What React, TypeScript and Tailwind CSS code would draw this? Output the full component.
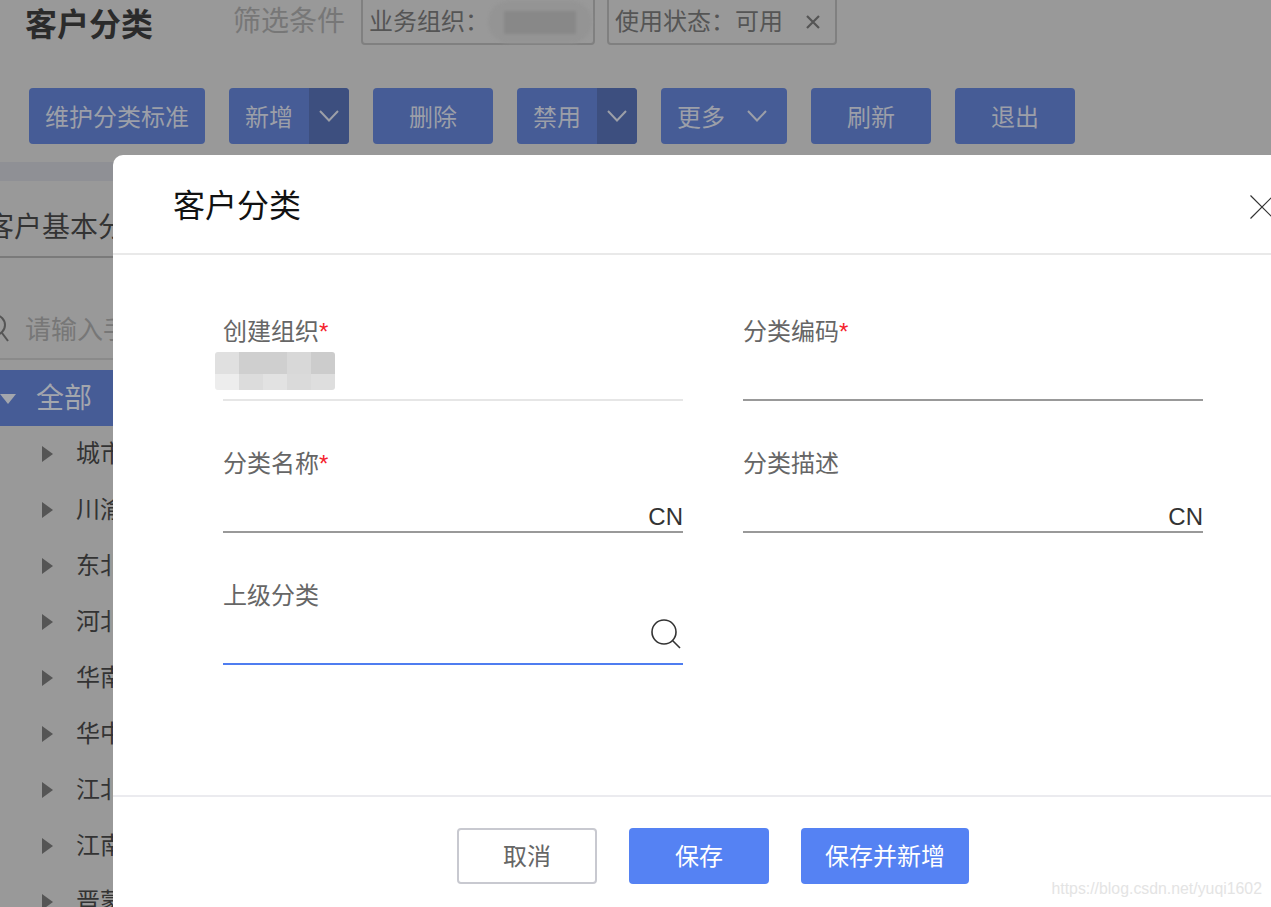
import React from "react";

function Chevron({ className }: { className: string }) {
  return (
    <svg viewBox="0 0 20 12" className={className} fill="none" stroke="currentColor" strokeWidth="2">
      <polyline points="1,1 10,10.5 19,1" />
    </svg>
  );
}

function Btn({ w, label }: { w: string; label: string }) {
  return (
    <div className={`${w} h-14 flex items-center justify-center pt-1 rounded-[4px] bg-[#465c96] text-[24px] text-[#9c9fa8]`}>
      {label}
    </div>
  );
}

function SplitBtn({ label }: { label: string }) {
  return (
    <div className="w-[120px] h-14 flex rounded-[4px] overflow-hidden bg-[#465c96] text-[24px] text-[#9c9fa8]">
      <div className="w-20 flex items-center justify-center pt-1">{label}</div>
      <div className="w-10 flex items-center justify-center bg-[#3d4f7f]">
        <Chevron className="w-5 h-3" />
      </div>
    </div>
  );
}

function TreeRow({ label }: { label: string }) {
  return (
    <div className="h-14 flex items-center pl-[42px] text-[24px] text-[#333] whitespace-nowrap">
      <svg viewBox="0 0 11 16" className="w-[11px] h-4 mr-[23px] shrink-0" fill="#555">
        <polygon points="0,0 11,8 0,16" />
      </svg>
      {label}
    </div>
  );
}

function Field({ label, required, children, line }: { label: string; required?: boolean; children?: React.ReactNode; line: string }) {
  return (
    <div className="h-[88px] flex flex-col">
      <div className="h-9 leading-[37px] text-[24px] text-[#666]">
        {label}
        {required && <span className="text-[#f5222d]">*</span>}
      </div>
      <div className={`h-[52px] flex items-end justify-end border-b-2 ${line}`}>{children}</div>
    </div>
  );
}

function Cn() {
  return <span className="text-[24px] leading-[28px] text-[#333]">CN</span>;
}

export default function App() {
  return (
    <div className="relative w-[1271px] h-[907px] overflow-hidden bg-[#999999] font-['Liberation_Sans','Noto_Sans_CJK_SC',sans-serif]">
      {/* Header */}
      <div className="flex h-[45px] items-end pl-[25px]">
        <div className="self-start w-[208px] h-[44px] leading-[50px] text-[32px] font-bold text-[#2b2b2b] whitespace-nowrap">客户分类</div>
        <div className="self-start w-[128px] h-[44px] leading-[44px] text-[28px] text-[#777] whitespace-nowrap">筛选条件</div>
        <div className="shrink-0 w-[234px] h-[60px] flex items-center pl-[6px] border-2 border-[#808080] rounded-[4px] text-[24px] text-[#555] pt-[14px] whitespace-nowrap">
          业务组织：
          <div className="shrink-0 -ml-px w-[104px] h-[42px] flex items-center justify-center rounded-[21px] bg-[#949494] blur-[1.5px]">
            <div className="w-[72px] h-[23px] bg-[#888888]" />
          </div>
        </div>
        <div className="shrink-0 ml-3 w-[230px] h-[60px] flex items-center pl-[6px] border-2 border-[#808080] rounded-[4px] text-[24px] text-[#555] pt-[14px] whitespace-nowrap">
          使用状态：可用
          <svg viewBox="0 0 14 14" className="w-[14px] h-[14px] ml-[23px]" fill="none" stroke="#555" strokeWidth="2.2">
            <path d="M1 1 13 13M13 1 1 13" />
          </svg>
        </div>
      </div>

      {/* Toolbar */}
      <div className="flex gap-6 mt-[43px] pl-[29px]">
        <Btn w="w-[176px]" label="维护分类标准" />
        <SplitBtn label="新增" />
        <Btn w="w-[120px]" label="删除" />
        <SplitBtn label="禁用" />
        <div className="w-[126px] h-14 flex items-center pl-4 gap-[22px] rounded-[4px] bg-[#465c96] text-[24px] text-[#9c9fa8]">
          <span className="pt-1">更多</span>
          <Chevron className="w-5 h-3" />
        </div>
        <Btn w="w-[120px]" label="刷新" />
        <Btn w="w-[120px]" label="退出" />
      </div>

      {/* Band */}
      <div className="mt-[18px] h-[19px] bg-[#8f9095]" />

      {/* Tab */}
      <div className="h-[77px] flex items-end border-b-2 border-[#7a7a7a]">
        <div className="-ml-[14px] h-[64px] leading-[72px] text-[28px] text-[#333] whitespace-nowrap">客户基本分类</div>
      </div>

      {/* Search */}
      <div className="h-[102px] flex items-center pt-[44px] border-b-2 border-[#8a8a8a]">
        <svg viewBox="0 0 24 32" className="-ml-[15px] w-6 h-8 shrink-0" fill="none" stroke="#555" strokeWidth="2">
          <circle cx="10" cy="11" r="10" />
          <path d="M17 19 23 27" />
        </svg>
        <span className="ml-4 text-[26px] text-[#777] whitespace-nowrap">请输入手机号</span>
      </div>

      {/* Tree */}
      <div className="mt-[10px]">
        <div className="h-14 flex items-center pt-px bg-[#465c96] text-[28px] text-[#a3a6ad] whitespace-nowrap">
          <svg viewBox="0 0 16 10" className="w-4 h-[10px] mr-5 shrink-0" fill="#a3a6ad">
            <polygon points="0,0 16,0 8,10" />
          </svg>
          全部
        </div>
        <TreeRow label="城市" />
        <TreeRow label="川渝" />
        <TreeRow label="东北" />
        <TreeRow label="河北" />
        <TreeRow label="华南" />
        <TreeRow label="华中" />
        <TreeRow label="江北" />
        <TreeRow label="江南" />
        <TreeRow label="晋蒙" />
      </div>

      {/* Modal */}
      <div className="absolute left-[113px] top-[155px] w-[1158px] h-[752px] flex flex-col bg-white rounded-tl-[10px]">
        <div className="h-[100px] shrink-0 flex items-center justify-between pl-[60px] border-b-2 border-[#e9e9e9]">
          <span className="text-[32px] text-[#111] pt-1">客户分类</span>
          <svg viewBox="0 0 24 24" className="w-6 h-6 -mr-[3px] mt-[6px]" fill="none" stroke="#333" strokeWidth="1.2">
            <path d="M0.5 0.5 23.5 23.5M23.5 0.5 0.5 23.5" />
          </svg>
        </div>

        <div className="flex-1 pt-[58px] pl-[110px]">
          <div className="grid grid-cols-[460px_460px] gap-x-[60px] gap-y-[44px]">
            <div className="h-[88px] flex flex-col">
              <div className="h-9 leading-[37px] text-[24px] text-[#666]">
                创建组织<span className="text-[#f5222d]">*</span>
              </div>
              <div className="h-[52px] border-b-2 border-[#e6e6e6]">
                <div className="-ml-2 mt-[3px] w-[120px] grid grid-cols-5 grid-rows-[22px_16px] rounded-[3px] overflow-hidden">
                  <div className="bg-[#e0e0e0]" />
                  <div className="bg-[#cfcfcf]" />
                  <div className="bg-[#cfcfcf]" />
                  <div className="bg-[#d8d8d8]" />
                  <div className="bg-[#cccccc]" />
                  <div className="bg-[#ededed]" />
                  <div className="bg-[#dcdcdc]" />
                  <div className="bg-[#e2e2e2]" />
                  <div className="bg-[#dadada]" />
                  <div className="bg-[#dedede]" />
                </div>
              </div>
            </div>
            <Field label="分类编码" required line="border-[#999]" />
            <Field label="分类名称" required line="border-[#999]"><Cn /></Field>
            <Field label="分类描述" line="border-[#999]"><Cn /></Field>
            <Field label="上级分类" line="border-[#4f7df0]">
              <svg viewBox="0 0 30 30" className="w-[30px] h-[30px] mb-[14px] mr-[2px]" fill="none" stroke="#333" strokeWidth="1.6">
                <circle cx="13" cy="13" r="12" />
                <path d="M21.5 21.5 29 29" />
              </svg>
            </Field>
          </div>
        </div>

        <div className="h-[112px] shrink-0 flex justify-center gap-8 pt-[31px] pl-[42px] border-t-2 border-[#ebebef] text-[24px]">
          <div className="w-[140px] h-14 flex items-center justify-center pt-[2px] rounded-[4px] border-2 border-[#c8c9d0] text-[#666]">取消</div>
          <div className="w-[140px] h-14 flex items-center justify-center pt-[2px] rounded-[4px] bg-[#5582f3] text-white">保存</div>
          <div className="w-[168px] h-14 flex items-center justify-center pt-[2px] rounded-[4px] bg-[#5582f3] text-white">保存并新增</div>
        </div>
      </div>

      {/* Watermark */}
      <div className="absolute right-[9px] bottom-[8px] text-[15.85px] leading-5 text-[#e4e4e4] whitespace-nowrap">
        https://blog.csdn.net/yuqi1602
      </div>
    </div>
  );
}
